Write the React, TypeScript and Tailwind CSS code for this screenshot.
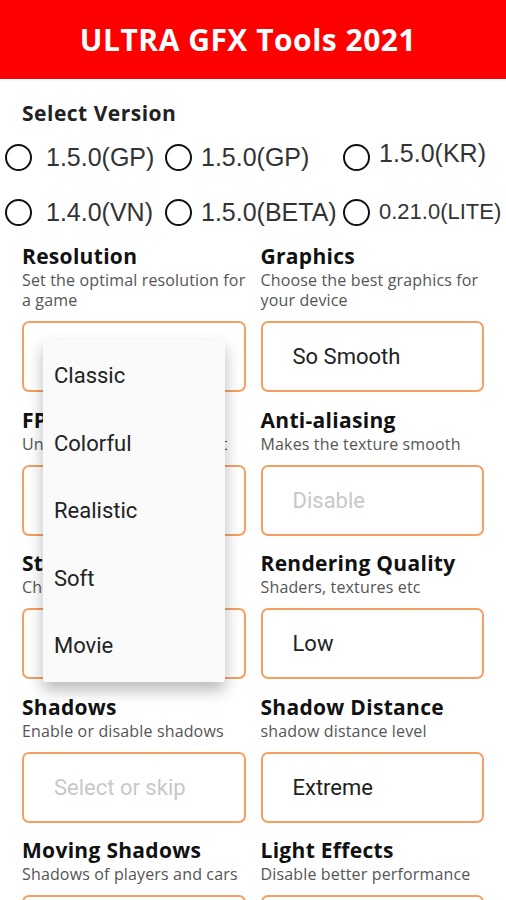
import { useState } from "react";

const versions = [
  { label: "1.5.0(GP)", text: "text-[25px]" },
  { label: "1.5.0(GP)", text: "text-[25px]" },
  { label: "1.5.0(KR)", text: "text-[25px] -mt-[7px]" },
  { label: "1.4.0(VN)", text: "text-[25px]" },
  { label: "1.5.0(BETA)", text: "text-[25px]" },
  { label: "0.21.0(LITE)", text: "text-[22px]" },
];

const fields = [
  {
    title: "Resolution",
    desc: "Set the optimal resolution for a game",
    value: "",
    placeholder: false,
  },
  {
    title: "Graphics",
    desc: "Choose the best graphics for your device",
    value: "So Smooth",
    placeholder: false,
  },
  {
    title: "FPS",
    desc: "Unlock the max frame limit",
    value: "",
    placeholder: false,
  },
  {
    title: "Anti-aliasing",
    desc: "Makes the texture smooth",
    value: "Disable",
    placeholder: true,
  },
  {
    title: "Style",
    desc: "Choose the game style",
    value: "",
    placeholder: false,
  },
  {
    title: "Rendering Quality",
    desc: "Shaders, textures etc",
    value: "Low",
    placeholder: false,
  },
  {
    title: "Shadows",
    desc: "Enable or disable shadows",
    value: "Select or skip",
    placeholder: true,
  },
  {
    title: "Shadow Distance",
    desc: "shadow distance level",
    value: "Extreme",
    placeholder: false,
  },
  {
    title: "Moving Shadows",
    desc: "Shadows of players and cars",
    value: "",
    placeholder: false,
  },
  {
    title: "Light Effects",
    desc: "Disable better performance",
    value: "",
    placeholder: false,
  },
];

const styles = ["Classic", "Colorful", "Realistic", "Soft", "Movie"];

export default function App() {
  const [version, setVersion] = useState(-1);

  return (
    <div className="relative h-[900px] w-[506px] overflow-hidden bg-white">
      <div className="flex h-[79px] items-center justify-center bg-[#fe0000] pr-[10px]">
        <h1 className="font-['Open_Sans',sans-serif] text-[30px] font-bold tracking-[0.5px] text-white">
          ULTRA GFX Tools 2021
        </h1>
      </div>

      <div className="pt-[22px]">
        <h2 className="px-[22px] font-['Open_Sans',sans-serif] text-[21px] font-bold leading-[24px] tracking-[0.5px] text-[#222]">
          Select Version
        </h2>

        <div className="mt-[12px] grid grid-cols-[160px_178px_1fr] gap-y-[15px] pl-[5px]">
          {versions.map((v, i) => (
            <button
              key={i}
              onClick={() => setVersion(i)}
              className={`flex h-[40px] items-center text-left ${
                i === 0 || i === 3 ? "gap-[14px]" : "gap-[9px]"
              }`}
            >
              <span className="flex h-[27px] w-[27px] shrink-0 items-center justify-center rounded-full border-[2px] border-[#111]">
                {version === i && (
                  <span className="h-[13px] w-[13px] rounded-full bg-[#111]" />
                )}
              </span>
              <span
                className={`font-['Liberation_Sans',Arial,sans-serif] leading-none text-[#333] ${v.text}`}
              >
                {v.label}
              </span>
            </button>
          ))}
        </div>

        <div className="mt-[12px] grid grid-cols-2 gap-x-[15px] gap-y-[15.5px] px-[22px]">
          {fields.map((f) => (
            <div key={f.title} className="flex flex-col">
              <div className="whitespace-nowrap font-['Open_Sans',sans-serif] text-[21px] font-bold leading-[24px] tracking-[0.3px] text-[#111]">
                {f.title}
              </div>
              <div className="mt-[2px] font-['Open_Sans',sans-serif] text-[16px] leading-[20px] tracking-[0.15px] text-[#555]">
                {f.desc}
              </div>
              <div className="mt-auto pt-[11px]">
                <div className="flex h-[71px] items-center rounded-[7px] border-2 border-[#f5a062] pl-[30px]">
                  <span
                    className={`font-['Roboto',sans-serif] text-[22px] ${
                      f.placeholder ? "text-[#c8c8c8]" : "text-[#222]"
                    }`}
                  >
                    {f.value}
                  </span>
                </div>
              </div>
            </div>
          ))}
        </div>
      </div>

      <div className="absolute left-[43px] top-[340px] w-[182px] rounded-[2px] bg-[#fafafa] py-[2px] shadow-[0_8px_16px_rgba(0,0,0,0.28)]">
        {styles.map((s) => (
          <div
            key={s}
            className="flex h-[67.5px] items-center pl-[11px] font-['Roboto',sans-serif] text-[22px] text-[#222]"
          >
            {s}
          </div>
        ))}
      </div>
    </div>
  );
}
